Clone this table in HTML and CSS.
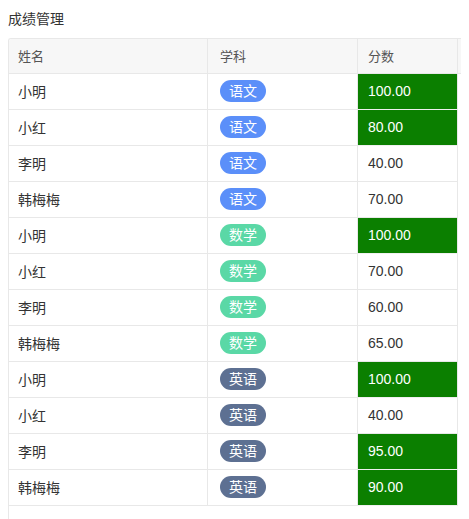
FILE: index.html
```html
<!DOCTYPE html>
<html lang="zh">
<head>
<meta charset="utf-8">
<link rel="stylesheet" href="styles.css">
</head>
<body>
<div class="title">成绩管理</div>
<div class="table">
  <div class="row head">
    <div class="cell c-name">姓名</div>
    <div class="cell c-subj">学科</div>
    <div class="cell c-score">分数</div>
    <div class="cell c-gutter"></div>
  </div>
  <div class="row"><div class="cell c-name">小明</div><div class="cell c-subj"><span class="tag t-cn">语文</span></div><div class="cell c-score hi">100.00</div></div>
  <div class="row"><div class="cell c-name">小红</div><div class="cell c-subj"><span class="tag t-cn">语文</span></div><div class="cell c-score hi">80.00</div></div>
  <div class="row"><div class="cell c-name">李明</div><div class="cell c-subj"><span class="tag t-cn">语文</span></div><div class="cell c-score">40.00</div></div>
  <div class="row"><div class="cell c-name">韩梅梅</div><div class="cell c-subj"><span class="tag t-cn">语文</span></div><div class="cell c-score">70.00</div></div>
  <div class="row"><div class="cell c-name">小明</div><div class="cell c-subj"><span class="tag t-math">数学</span></div><div class="cell c-score hi">100.00</div></div>
  <div class="row"><div class="cell c-name">小红</div><div class="cell c-subj"><span class="tag t-math">数学</span></div><div class="cell c-score">70.00</div></div>
  <div class="row"><div class="cell c-name">李明</div><div class="cell c-subj"><span class="tag t-math">数学</span></div><div class="cell c-score">60.00</div></div>
  <div class="row"><div class="cell c-name">韩梅梅</div><div class="cell c-subj"><span class="tag t-math">数学</span></div><div class="cell c-score">65.00</div></div>
  <div class="row"><div class="cell c-name">小明</div><div class="cell c-subj"><span class="tag t-en">英语</span></div><div class="cell c-score hi">100.00</div></div>
  <div class="row"><div class="cell c-name">小红</div><div class="cell c-subj"><span class="tag t-en">英语</span></div><div class="cell c-score">40.00</div></div>
  <div class="row"><div class="cell c-name">李明</div><div class="cell c-subj"><span class="tag t-en">英语</span></div><div class="cell c-score hi">95.00</div></div>
  <div class="row"><div class="cell c-name">韩梅梅</div><div class="cell c-subj"><span class="tag t-en">英语</span></div><div class="cell c-score hi">90.00</div></div>
</div>
</body>
</html>
```
FILE: styles.css
```css
html, body {
  overflow: hidden;
}
body {
  margin: 8px;
  font-family: "Liberation Sans", "Noto Sans CJK SC", sans-serif;
  font-size: 14px;
  color: #333;
  background: #fff;
}
.title {
  height: 22px;
  line-height: 22px;
  font-size: 14px;
  color: #333;
  margin-bottom: 8px;
}
.table {
  width: 461px;
  height: 480px;
  border-left: 1px solid #e8e8e8;
  border-top: 1px solid #e8e8e8;
  border-top-left-radius: 3px;
  overflow: hidden;
}
.row {
  display: flex;
  height: 36px;
}
.row.head {
  height: 35px;
  background: #f7f7f7;
  color: #555;
  font-size: 13px;
}
.cell {
  box-sizing: border-box;
  border-right: 1px solid #e8e8e8;
  border-bottom: 1px solid #e8e8e8;
  display: flex;
  align-items: center;
  padding-left: 9px;
  padding-bottom: 2px;
}
.c-name { width: 199px; }
.c-subj { width: 150px; padding-left: 12px; }
.c-score { width: 100px; padding-left: 10px; }
.c-gutter { flex: 1; border-right: none; }
.hi {
  background: #0b7f00;
  color: #fff;
  border-bottom-color: #f0f0f0;
}
.tag {
  display: inline-block;
  height: 22px;
  line-height: 22px;
  padding: 0 9px;
  border-radius: 11px;
  color: #fff;
  font-size: 14px;
}
.t-cn { background: #5b8ff9; }
.t-math { background: #5ad8a6; }
.t-en { background: #5d7092; }
```
